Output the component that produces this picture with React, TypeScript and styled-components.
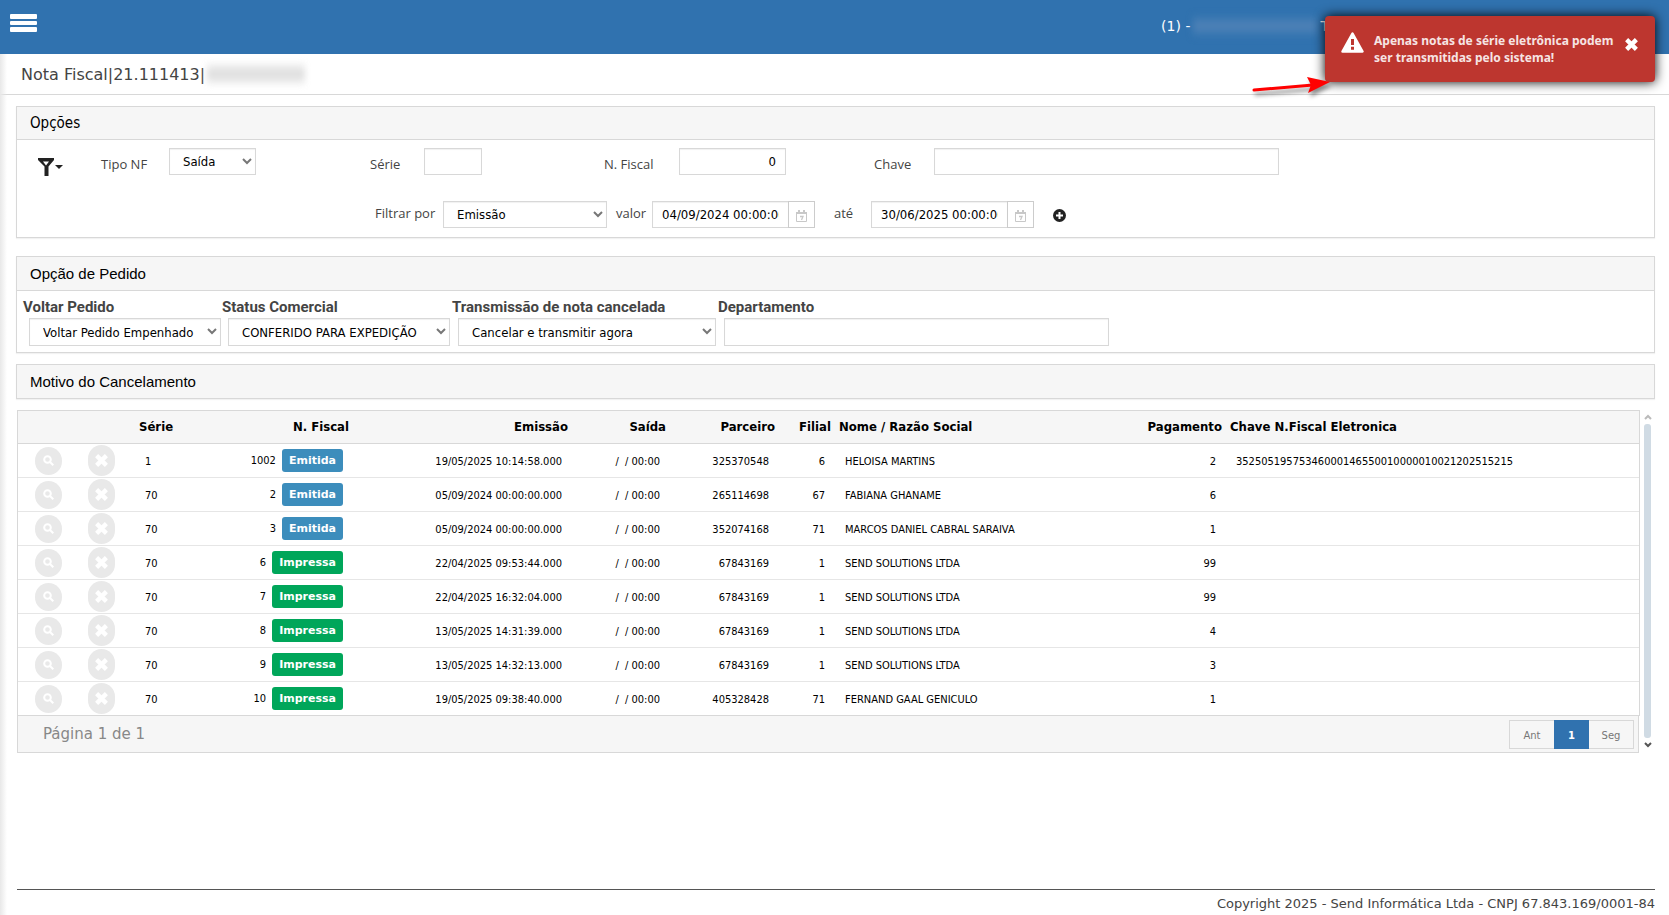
import React from 'react';
import styled, { createGlobalStyle } from 'styled-components';

const verdana = '"DejaVu Sans", Verdana, sans-serif';
const tahoma = '"DejaVu Sans Condensed", Tahoma, sans-serif';
const line = '#d8d8d8';
const blue = '#3072af';

const GlobalStyle = createGlobalStyle`
  *, *::before, *::after { box-sizing: border-box; }
  body { margin: 0; background: #fff; color: #000; font: 13px ${tahoma}; }
  button, input, select { font: inherit; color: inherit; border-radius: 0; margin: 0; }
`;

const Page = styled.div`
  min-height: 100vh;
  display: flex;
  flex-direction: column;
  position: relative;
`;

const TopBar = styled.header`
  height: 54px;
  background: ${blue};
  color: #fff;
  display: flex;
  align-items: center;
  justify-content: space-between;
  padding: 0 340px 0 10px;
  position: relative;
  z-index: 1;
`;

const MenuButton = styled.button`
  border: 0;
  padding: 0;
  background: none;
  width: 27px;
  height: 18px;
  display: grid;
  gap: 2px;
  margin-bottom: 8px;
  span { background: #fff; border-radius: 1px; }
`;

const Account = styled.div`
  font: 14px ${verdana};
  display: flex;
  align-items: center;
  gap: 3px;
  padding-bottom: 2px;
`;

const HiddenName = styled.span<{ $w: number; $edge: string; $mid: string }>`
  width: ${p => p.$w}px;
  height: 22px;
  background: linear-gradient(${p => `${p.$edge}, ${p.$mid}, ${p.$edge}`});
  filter: blur(3px);
`;

const SideShadow = styled.div`
  position: absolute;
  left: 0;
  top: 54px;
  bottom: 0;
  width: 7px;
  background: linear-gradient(90deg, #e8e8e8, rgba(255, 255, 255, 0));
`;

const TitleBar = styled.div`
  height: 41px;
  border-bottom: 1px solid ${line};
  display: flex;
  align-items: center;
  padding-left: 21px;
  gap: 2px;
  h1 { margin: 0; font: 16px ${verdana}; color: #444; }
`;

const Content = styled.main`
  padding: 11px 14px 0 16px;
  display: flex;
  flex-direction: column;
`;

const Panel = styled.section<{ $gap: number }>`
  border: 1px solid ${line};
  box-shadow: 0 1px 1px rgba(0, 0, 0, 0.05);
  margin-bottom: ${p => p.$gap}px;
`;

const PanelTitle = styled.h2<{ $face?: string; $open?: boolean }>`
  margin: 0;
  height: ${p => (p.$open ? 34 : 33)}px;
  padding: 0 13px 1px;
  display: flex;
  align-items: center;
  background: #f6f6f6;
  font: 15px ${p => p.$face ?? '"Liberation Sans", Arial, sans-serif'};
  &:not(:last-child) { border-bottom: 1px solid ${line}; }
`;

const OptionsBody = styled.div`
  padding: 8px 0 9px 21px;
  display: grid;
  gap: 24px;
`;

const FilterGrid = styled.div`
  display: grid;
  grid-template-columns: 63px 269px 234px 270px 1fr;
`;

const FilterLine = styled.div`
  display: flex;
  padding-left: 337px;
`;

const Field = styled.div<{ $before?: number }>`
  display: flex;
  margin-left: ${p => p.$before ?? 0}px;
`;

const Label = styled.label<{ $w: number; $drop?: number }>`
  width: ${p => p.$w}px;
  flex: none;
  line-height: 24px;
  padding-top: ${p => p.$drop ?? 0}px;
  color: #444;
  font-family: "Open Sans", sans-serif;
  white-space: nowrap;
`;

const Input = styled.input<{ $w: number }>`
  width: ${p => p.$w}px;
  height: 27px;
  border: 1px solid ${line};
  padding: 0 9px;
  background: #fff;
  box-shadow: inset 0 1px 1px rgba(0, 0, 0, 0.06);
`;

const NumberInput = styled(Input)`
  text-align: right;
`;

const SelectWrap = styled.div<{ $w: number; $h: number }>`
  position: relative;
  width: ${p => p.$w}px;
  height: ${p => p.$h}px;
  select {
    appearance: none;
    width: 100%;
    height: 100%;
    border: 1px solid ${line};
    background: #fff;
    padding: 0 20px 0 13px;
    box-shadow: inset 0 1px 1px rgba(0, 0, 0, 0.06);
  }
  svg { position: absolute; right: 4px; top: 10px; pointer-events: none; }
`;

const CalendarButton = styled.button`
  width: 27px;
  height: 27px;
  margin-left: -1px;
  border: 1px solid #ccc;
  background: #fff;
  padding: 2px 0 0;
  display: grid;
  place-items: center;
`;

const IconButton = styled.button`
  border: 0;
  background: none;
  padding: 0;
  display: block;
`;

const FilterButton = styled(IconButton)`
  width: 25px;
  height: 19px;
  margin-top: 10px;
`;

const AddButton = styled(IconButton)`
  height: 13px;
  margin: 8px 0 0 19px;
`;

const OrderBody = styled.div`
  display: flex;
  padding: 5px 0 6px 6px;
`;

const OrderField = styled.div<{ $w: number }>`
  width: ${p => p.$w}px;
  label {
    display: block;
    font: bold 15px/22px Roboto, sans-serif;
    color: #444;
  }
  ${SelectWrap}, ${Input} { margin-left: 6px; height: 28px; }
`;

const GridRow = styled.div`
  display: flex;
  gap: 4px;
  padding: 0 4px 0 1px;
`;

const GridBox = styled.div`
  flex: 1;
  min-width: 0;
`;

const Table = styled.table`
  width: 100%;
  table-layout: fixed;
  border-collapse: separate;
  border-spacing: 0;
  border: 1px solid ${line};
  border-bottom: 0;
`;

const Th = styled.th<{ $right?: boolean }>`
  height: 33px;
  padding: 0 4px 2px;
  background: #f6f6f6;
  border-bottom: 1px solid ${line};
  text-align: ${p => (p.$right ? 'right' : 'left')};
  font-size: 13px;
  white-space: nowrap;
`;

const Td = styled.td<{ $right?: boolean }>`
  height: 34px;
  padding: 2px 10px 0;
  border-bottom: 1px solid #e6e6e6;
  text-align: ${p => (p.$right ? 'right' : 'left')};
  font-size: 11px;
  white-space: nowrap;
  tr:last-child > & { border-bottom-color: ${line}; }
`;

const ActionTd = styled(Td)`
  padding: 0 0 0 ${p => (p.$right ? 9 : 17)}px;
  text-align: left;
`;

const RoundButton = styled.button<{ $h: number }>`
  width: 27px;
  height: ${p => p.$h}px;
  border: 0;
  border-radius: 14px;
  background: #e9e9e9;
  padding: 0;
  display: grid;
  place-items: center;
`;

const NumberCell = styled.div`
  display: flex;
  justify-content: flex-end;
  align-items: center;
  gap: 6px;
  margin-top: -2px;
`;

const Badge = styled.span<{ $tone: string }>`
  background: ${p => p.$tone};
  color: #fff;
  border-radius: 3px;
  padding: 0 7px;
  font: bold 11px/23px ${verdana};
`;

const PagerBar = styled.div`
  height: 37px;
  margin-right: 1px;
  border: 1px solid ${line};
  border-top: 0;
  background: #f6f6f6;
  display: flex;
  align-items: center;
  justify-content: space-between;
  padding: 0 4px 0 25px;
  color: #888;
  font: 15px ${verdana};
`;

const Pager = styled.nav`
  display: flex;
  border: 1px solid ${line};
`;

const PageButton = styled.button<{ $active?: boolean }>`
  width: ${p => (p.$active ? 35 : 44)}px;
  height: 29px;
  margin: -1px 0;
  border: 0;
  padding: 2px 0 0;
  background: ${p => (p.$active ? blue : 'transparent')};
  color: ${p => (p.$active ? '#fff' : '#777')};
  font: ${p => (p.$active ? 'bold' : 'normal')} 10px ${verdana};
`;

const ScrollRail = styled.div`
  width: 7px;
  display: flex;
  flex-direction: column;
  align-items: center;
  padding: 4px 0 5px;
  gap: 4px;
  span { flex: 1; width: 7px; border-radius: 3px; background: #d0dbe4; }
`;

const Footer = styled.footer`
  margin: auto 14px 0 17px;
  height: 26px;
  border-top: 1px solid #555;
  text-align: right;
  font: 13px/27px ${verdana};
  color: #444;
`;

const Toast = styled.div`
  position: absolute;
  z-index: 2;
  top: 16px;
  right: 14px;
  width: 330px;
  height: 66px;
  border-radius: 4px;
  background: #bd362f;
  box-shadow: 0 0 12px #000;
  color: #fff;
  display: flex;
  align-items: flex-start;
  padding: 16px 16px 0;
  p { margin: 0 0 0 10px; width: 251px; font: bold 12px/17px "Noto Sans", sans-serif; color: #f6e4e3; }
  button { margin-top: 6px; }
`;

const Pointer = styled.svg`
  position: absolute;
  z-index: 3;
  top: 70px;
  right: 334px;
  filter: drop-shadow(2px 4px 2px rgba(0, 0, 0, 0.45));
`;

const Chevron = () => (
  <svg width="10" height="7" viewBox="0 0 10 7" fill="none" stroke="#777" strokeWidth="2"><path d="M1 1l4 4 4-4" /></svg>
);

const ArrowMark = ({ up }: { up?: boolean }) => (
  <svg width="8" height="6" viewBox="0 0 8 6" fill="none" stroke={up ? '#bbb' : '#555'} strokeWidth="2">
    <path d={up ? 'M1 5l3-3 3 3' : 'M1 1l3 3 3-3'} />
  </svg>
);

const Cross = ({ size }: { size: number }) => (
  <svg width={size} height={size} viewBox="0 0 12 12" fill="none" stroke="#fff" strokeWidth="4"><path d="M1.500 1.500l9 9M10.500 1.500l-9 9" /></svg>
);

const Magnifier = () => (
  <svg width="11" height="11" viewBox="0 0 11 11" fill="none" stroke="#fff" strokeWidth="2"><circle cx="4.500" cy="4.500" r="3.300" /><path d="M7 7l3.300 3.300" /></svg>
);

const Calendar = () => (
  <svg width="11" height="12" viewBox="0 0 11 12" fill="none" stroke="#c8c8c8">
    <path d="M.5 2.500h10v9H.5z" /><path d="M0 3h11" strokeWidth="2" /><path d="M3 0v3M8 0v3" strokeWidth="2" /><path d="M4 6.500h3L5.500 10" strokeWidth="1.300" />
  </svg>
);

function Choice({ id, width, height = 27, value }: { id: string; width: number; height?: number; value: string }) {
  return (
    <SelectWrap $w={width} $h={height}>
      <select id={id} defaultValue={value}><option>{value}</option></select>
      <Chevron />
    </SelectWrap>
  );
}

const widths = [61, 56, 81, 137, 219, 98, 109, 56, 300, 91];
const heads: [string, boolean][] = [
  ['Série', false], ['N. Fiscal', true], ['Emissão', true], ['Saída', true], ['Parceiro', true], ['Filial', true],
  ['Nome / Razão Social', false], ['Pagamento', true], ['Chave N.Fiscal Eletronica', false],
];

type Status = 'Emitida' | 'Impressa';
const rows: [string, string, Status, string, string, string, string, string, string][] = [
  ['1', '1002', 'Emitida', '19/05/2025 10:14:58.000', '325370548', '6', 'HELOISA MARTINS', '2', '35250519575346000146550010000010021202515215'],
  ['70', '2', 'Emitida', '05/09/2024 00:00:00.000', '265114698', '67', 'FABIANA GHANAME', '6', ''],
  ['70', '3', 'Emitida', '05/09/2024 00:00:00.000', '352074168', '71', 'MARCOS DANIEL CABRAL SARAIVA', '1', ''],
  ['70', '6', 'Impressa', '22/04/2025 09:53:44.000', '67843169', '1', 'SEND SOLUTIONS LTDA', '99', ''],
  ['70', '7', 'Impressa', '22/04/2025 16:32:04.000', '67843169', '1', 'SEND SOLUTIONS LTDA', '99', ''],
  ['70', '8', 'Impressa', '13/05/2025 14:31:39.000', '67843169', '1', 'SEND SOLUTIONS LTDA', '4', ''],
  ['70', '9', 'Impressa', '13/05/2025 14:32:13.000', '67843169', '1', 'SEND SOLUTIONS LTDA', '3', ''],
  ['70', '10', 'Impressa', '19/05/2025 09:38:40.000', '405328428', '71', 'FERNAND GAAL GENICULO', '1', ''],
];

export default function App() {
  return (
    <Page>
      <GlobalStyle />
      <TopBar>
        <MenuButton aria-label="Menu"><span /><span /><span /></MenuButton>
        <Account>(1) - <HiddenName $w={124} $edge="#3475b0" $mid="#5082b7" />T</Account>
      </TopBar>
      <SideShadow />
      <TitleBar>
        <h1>Nota Fiscal|21.111413|</h1>
        <HiddenName $w={98} $edge="#f6f6f6" $mid="#dcdcdc" />
      </TitleBar>

      <Content>
        <Panel $gap={18}>
          <PanelTitle $face={tahoma}>Opções</PanelTitle>
          <OptionsBody>
            <FilterGrid>
              <FilterButton aria-label="Filtros">
                <svg width="25" height="19" viewBox="0 0 25 19" fill="#222">
                  <path fillRule="evenodd" d="M0 0h16v2l-5.500 6.500V18h-4V8.500L0 2zM5 3.500l3 4 3-4z" /><path d="M17 7h8l-4 4z" />
                </svg>
              </FilterButton>
              <Field><Label htmlFor="tipo" $w={68} $drop={4}>Tipo NF</Label><Choice id="tipo" width={87} value="Saída" /></Field>
              <Field><Label htmlFor="serie" $w={54} $drop={4}>Série</Label><Input id="serie" $w={58} /></Field>
              <Field><Label htmlFor="fiscal" $w={75} $drop={4}>N. Fiscal</Label><NumberInput id="fiscal" $w={107} defaultValue="0" /></Field>
              <Field><Label htmlFor="chave" $w={60} $drop={4}>Chave</Label><Input id="chave" $w={345} /></Field>
            </FilterGrid>
            <FilterLine>
              <Label htmlFor="filtro" $w={68}>Filtrar por</Label>
              <Choice id="filtro" width={164} value="Emissão" />
              <Field $before={9}>
                <Label htmlFor="de" $w={36}>valor</Label>
                <Input id="de" $w={137} defaultValue="04/09/2024 00:00:00" />
                <CalendarButton aria-label="Data inicial"><Calendar /></CalendarButton>
              </Field>
              <Field $before={19}>
                <Label htmlFor="ate" $w={37}>até</Label>
                <Input id="ate" $w={137} defaultValue="30/06/2025 00:00:00" />
                <CalendarButton aria-label="Data final"><Calendar /></CalendarButton>
              </Field>
              <AddButton aria-label="Adicionar filtro">
                <svg width="13" height="13" viewBox="0 0 13 13"><circle cx="6.500" cy="6.500" r="6.500" fill="#222" /><path d="M6.500 3v7M3 6.500h7" stroke="#fff" strokeWidth="2" /></svg>
              </AddButton>
            </FilterLine>
          </OptionsBody>
        </Panel>

        <Panel $gap={11}>
          <PanelTitle $open>Opção de Pedido</PanelTitle>
          <OrderBody>
            <OrderField $w={199}><label htmlFor="voltar">Voltar Pedido</label><Choice id="voltar" width={192} value="Voltar Pedido Empenhado" /></OrderField>
            <OrderField $w={230}><label htmlFor="status">Status Comercial</label><Choice id="status" width={222} value="CONFERIDO PARA EXPEDIÇÃO" /></OrderField>
            <OrderField $w={266}><label htmlFor="trans">Transmissão de nota cancelada</label><Choice id="trans" width={258} value="Cancelar e transmitir agora" /></OrderField>
            <OrderField $w={391}><label htmlFor="dep">Departamento</label><Input id="dep" $w={385} /></OrderField>
          </OrderBody>
        </Panel>

        <Panel $gap={11}><PanelTitle>Motivo do Cancelamento</PanelTitle></Panel>

        <GridRow>
          <GridBox>
            <Table>
              <colgroup>{widths.map((w, i) => <col key={i} width={w} />)}<col /></colgroup>
              <thead>
                <tr>
                  <Th /><Th />
                  {heads.map(([t, right]) => <Th key={t} $right={right}>{t}</Th>)}
                </tr>
              </thead>
              <tbody>
                {rows.map(([serie, num, status, emissao, parceiro, filial, nome, pag, chave]) => (
                  <tr key={num}>
                    <ActionTd><RoundButton $h={28} aria-label={`Ver nota ${num}`}><Magnifier /></RoundButton></ActionTd>
                    <ActionTd $right><RoundButton $h={31} aria-label={`Cancelar nota ${num}`}><Cross size={13} /></RoundButton></ActionTd>
                    <Td>{serie}</Td>
                    <Td $right><NumberCell>{num}<Badge $tone={status === 'Emitida' ? '#3c8dbc' : '#00a65a'}>{status}</Badge></NumberCell></Td>
                    <Td $right>{emissao}</Td>
                    <Td $right>/&nbsp; / 00:00</Td>
                    <Td $right>{parceiro}</Td>
                    <Td $right>{filial}</Td>
                    <Td>{nome}</Td>
                    <Td $right>{pag}</Td>
                    <Td>{chave}</Td>
                  </tr>
                ))}
              </tbody>
            </Table>
            <PagerBar>
              <span>Página 1 de 1</span>
              <Pager>
                <PageButton>Ant</PageButton><PageButton $active>1</PageButton><PageButton>Seg</PageButton>
              </Pager>
            </PagerBar>
          </GridBox>
          <ScrollRail><ArrowMark up /><span /><ArrowMark /></ScrollRail>
        </GridRow>
      </Content>

      <Footer>Copyright 2025 - Send Informática Ltda - CNPJ 67.843.169/0001-84</Footer>

      <Toast role="alert">
        <svg width="23" height="21" viewBox="0 0 23 21">
          <path d="M11.500 1.500L21.500 19.500H1.500z" fill="#fff" stroke="#fff" strokeWidth="2.500" strokeLinejoin="round" />
          <path d="M11.500 7v6M11.500 14.800v3" stroke="#bd362f" strokeWidth="3" />
        </svg>
        <p>Apenas notas de série eletrônica podem ser transmitidas pelo sistema!</p>
        <IconButton aria-label="Fechar"><Cross size={13} /></IconButton>
      </Toast>
      <Pointer width="84" height="28" viewBox="0 0 84 28">
        <path d="M3 20L62 15" stroke="#f00" strokeWidth="3" strokeLinecap="round" />
        <path d="M79 12L56 7l4 8-3 8z" fill="#f00" />
      </Pointer>
    </Page>
  );
}
